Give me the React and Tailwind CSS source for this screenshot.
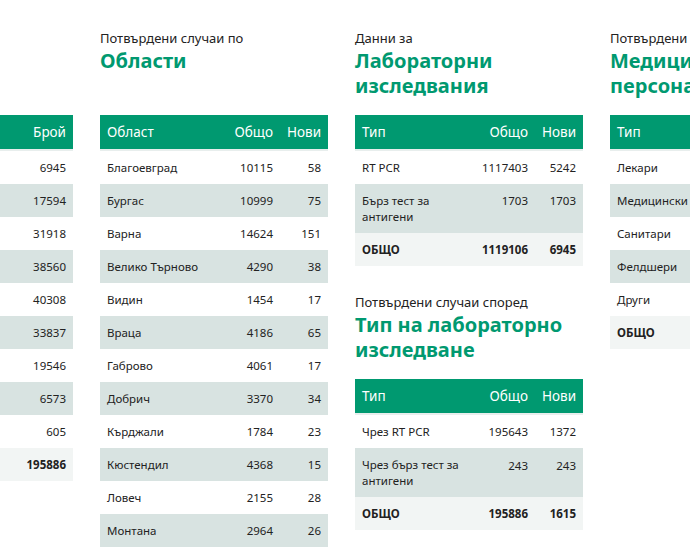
const F = { fontFamily: '"Noto Sans","Open Sans",sans-serif' };

function Head({ sub, title }) {
  return (
    <div className="h-[85px]">
      <div className="text-[13px] leading-[16px] text-[#222]">{sub}</div>
      <div className="text-[20px] leading-[25px] font-bold text-[#009970] mt-[2px]">{title}</div>
    </div>
  );
}

function Table({ cols, rows, total, widths }) {
  return (
    <table className="w-[228px] border-collapse table-fixed">
      <colgroup>
        {widths.map((w, i) => <col key={i} style={{ width: w }} />)}
      </colgroup>
      <thead>
        <tr className="bg-[#009970] text-white text-[13.5px] h-[35px] border-b-2 border-[#e8eeed]">
          {cols.map((c, i) => (
            <th key={i} className={`font-normal px-[7px] ${i === 0 ? "text-left" : "text-right"}`}>{c}</th>
          ))}
        </tr>
      </thead>
      <tbody className="text-[11.5px] text-[#222]">
        {rows.map((r, ri) => (
          <tr key={ri} className={ri % 2 ? "bg-[#d8e3e1]" : "bg-white"}>
            {r.map((c, i) => (
              <td key={i} className={`px-[7px] align-top py-[8.5px] leading-[16px] ${i === 0 ? "text-left whitespace-nowrap overflow-visible" : "text-right"}`}>{c}</td>
            ))}
          </tr>
        ))}
        {total && (
          <tr className="bg-[#f2f5f4] font-bold">
            {total.map((c, i) => (
              <td key={i} className={`px-[7px] py-[8px] leading-[17px] ${i === 0 ? "text-left" : "text-right"}`}>{c}</td>
            ))}
          </tr>
        )}
      </tbody>
    </table>
  );
}

export default function App() {
  const ages = [["0 - 19","6945"],["20 - 29","17594"],["30 - 39","31918"],["40 - 49","38560"],["50 - 59","40308"],["60 - 69","33837"],["70 - 79","19546"],["80 - 89","6573"],["90+","605"]];
  const regions = [["Благоевград","10115","58"],["Бургас","10999","75"],["Варна","14624","151"],["Велико Търново","4290","38"],["Видин","1454","17"],["Враца","4186","65"],["Габрово","4061","17"],["Добрич","3370","34"],["Кърджали","1784","23"],["Кюстендил","4368","15"],["Ловеч","2155","28"],["Монтана","2964","26"],["Пазарджик","5310","40"],["Перник","3120","22"]];
  const lab1 = [["RT PCR","1117403","5242"],["Бърз тест за антигени","1703","1703"]];
  return (
    <div style={F} className="w-[690px] h-[550px] overflow-hidden bg-white">
      <div className="flex gap-[27px] ml-[-155px] pt-[30px] w-max">
        <div className="w-[228px]">
          <Head sub="Случаи по" title="Възраст" />
          <Table cols={["Възраст","Брой"]} widths={["150px","78px"]} rows={ages} total={["ОБЩО","195886"]} />
        </div>
        <div className="w-[228px]">
          <Head sub="Потвърдени случаи по" title="Области" />
          <Table cols={["Област","Общо","Нови"]} widths={["118px","62px","48px"]} rows={regions} />
        </div>
        <div className="w-[228px]">
          <Head sub="Данни за" title={<>Лабораторни<br />изследвания</>} />
          <table className="w-[228px] border-collapse table-fixed">
            <colgroup><col style={{ width: "118px" }} /><col style={{ width: "62px" }} /><col style={{ width: "48px" }} /></colgroup>
            <thead>
              <tr className="bg-[#009970] text-white text-[13.5px] h-[35px] border-b-2 border-[#e8eeed]">
                <th className="font-normal px-[7px] text-left">Тип</th><th className="font-normal px-[7px] text-right">Общо</th><th className="font-normal px-[7px] text-right">Нови</th>
              </tr>
            </thead>
            <tbody className="text-[11.5px] text-[#222]">
              {lab1.map((r, ri) => (
                <tr key={ri} className={ri % 2 ? "bg-[#d8e3e1]" : "bg-white"}>
                  {r.map((c, i) => <td key={i} className={`px-[7px] align-top py-[8.5px] leading-[16px] ${i === 0 ? "text-left" : "text-right"}`}>{c}</td>)}
                </tr>
              ))}
              <tr className="bg-[#f2f5f4] font-bold">
                <td className="px-[7px] py-[8px] leading-[17px]">ОБЩО</td><td className="px-[7px] text-right">1119106</td><td className="px-[7px] text-right">6945</td>
              </tr>
            </tbody>
          </table>
          <div className="mt-[28px]">
            <Head sub="Потвърдени случаи според" title={<>Тип на лабораторно<br />изследване</>} />
          </div>
          <table className="w-[228px] border-collapse table-fixed">
            <colgroup><col style={{ width: "118px" }} /><col style={{ width: "62px" }} /><col style={{ width: "48px" }} /></colgroup>
            <thead>
              <tr className="bg-[#009970] text-white text-[13.5px] h-[35px] border-b-2 border-[#e8eeed]">
                <th className="font-normal px-[7px] text-left">Тип</th><th className="font-normal px-[7px] text-right">Общо</th><th className="font-normal px-[7px] text-right">Нови</th>
              </tr>
            </thead>
            <tbody className="text-[11.5px] text-[#222]">
              <tr className="bg-white"><td className="px-[7px] py-[8.5px] leading-[16px]">Чрез RT PCR</td><td className="px-[7px] text-right">195643</td><td className="px-[7px] text-right">1372</td></tr>
              <tr className="bg-[#d8e3e1]"><td className="px-[7px] py-[8.5px] leading-[16px] align-top">Чрез бърз тест за антигени</td><td className="px-[7px] py-[8.5px] align-top text-right">243</td><td className="px-[7px] py-[8.5px] align-top text-right">243</td></tr>
              <tr className="bg-[#f2f5f4] font-bold"><td className="px-[7px] py-[8px] leading-[17px]">ОБЩО</td><td className="px-[7px] text-right">195886</td><td className="px-[7px] text-right">1615</td></tr>
            </tbody>
          </table>
        </div>
        <div className="w-[228px]">
          <Head sub="Потвърдени случаи сред" title={<>Медицински<br />персонал</>} />
          <Table cols={["Тип","Общо","Нови"]} widths={["160px","40px","28px"]}
            rows={[["Лекари","2010","12"],["Медицински сестри","2650","18"],["Санитари","760","5"],["Фелдшери","240","2"],["Други","1320","9"]]}
            total={["ОБЩО","6980","46"]} />
        </div>
      </div>
    </div>
  );
}
